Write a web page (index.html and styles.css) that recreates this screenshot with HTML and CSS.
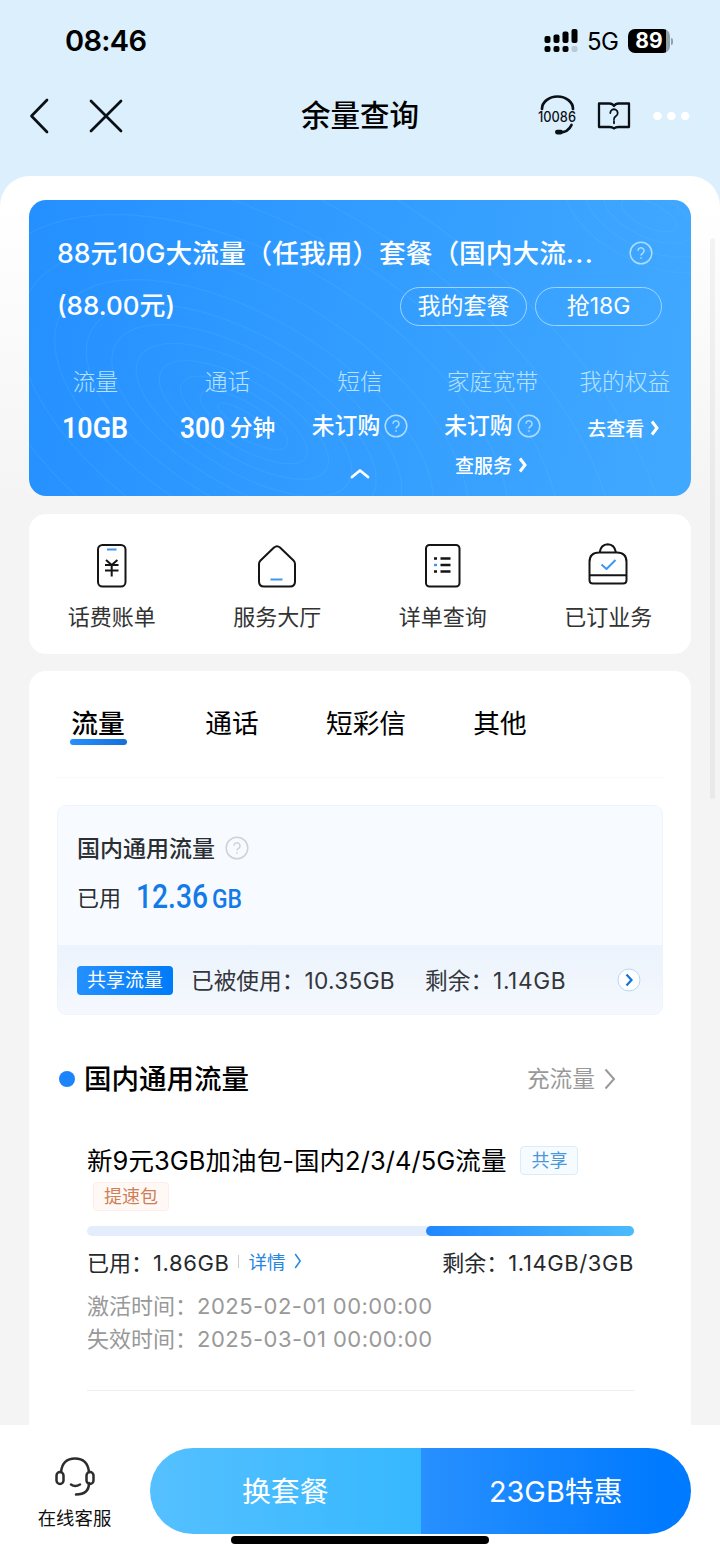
FILE: index.html
```html
<!DOCTYPE html>
<html lang="zh-CN">
<head>
<meta charset="utf-8">
<title>余量查询</title>
<link rel="stylesheet" href="styles.css">
</head>
<body>
<svg class="defs" width="0" height="0">
  <symbol id="help" viewBox="0 0 24 24"><circle cx="12" cy="12" r="10.8" fill="none" stroke="currentColor" stroke-width="1.500"/><path d="M9 9.800a3 3 0 1 1 4.600 2.500c-1.100.7-1.600 1.100-1.600 2.200M12 16.300v1.500" fill="none" stroke="currentColor" stroke-width="1.500"/></symbol>
</svg>
<header class="top">
  <div class="status">
    <span class="clock">08:46</span>
    <div class="signals">
      <svg width="34" height="24" viewBox="0 0 34 24"><rect x="0.500" y="7" width="6" height="7" rx="2"/><rect x="9.500" y="5.500" width="6" height="8.500" rx="2"/><rect x="18.500" y="2.500" width="6" height="11.500" rx="2"/><rect x="27.500" y="0" width="6" height="14" rx="2"/><rect x="0.500" y="17" width="6" height="6" rx="2"/><rect x="9.500" y="17" width="6" height="6" rx="2"/><rect x="18.500" y="17" width="6" height="6" rx="2"/><rect x="27.500" y="17" width="6" height="6" rx="2" fill="#b9c9d5"/></svg>
      <span class="net">5G</span>
      <span class="battery"><b>89</b></span><i class="nub"></i>
    </div>
  </div>
  <nav class="nav">
    <svg class="back" width="20" height="36" viewBox="0 0 20 36"><path d="M18 2 2.500 18 18 34"/></svg>
    <svg class="close" width="34" height="34" viewBox="0 0 34 34"><path d="m2 2 30 30M32 2 2 32"/></svg>
    <h1>余量查询</h1>
    <div class="tools">
      <svg width="48" height="42" viewBox="0 0 48 42"><path d="M9 14a15.500 12.500 0 0 1 31 0M38.500 30c-2.500 5.500-6 7.500-12 7.500" fill="none" stroke="#0b1016" stroke-width="2.300" stroke-linecap="round"/><rect x="22" y="34.800" width="8" height="4.600" rx="2.300" fill="#0b1016"/><text x="5" y="27" textLength="38" lengthAdjust="spacingAndGlyphs">10086</text></svg>
      <svg class="book" width="34" height="32" viewBox="0 0 34 32"><path d="M2 3.500h10.500q3 0 4.500 2.500 1.500-2.500 4.500-2.500H32V27H21.500q-3 0-4.500 1.500-1.500-1.500-4.500-1.500H2z"/><path class="mark" d="M13.300 13a3.700 3.700 0 1 1 5.700 3.100c-1.500 1-2 1.500-2 3.200M17 21v2.300"/></svg>
      <svg class="dots" width="37" height="10" viewBox="0 0 37 10"><circle cx="4.500" cy="5" r="4.300"/><circle cx="18.300" cy="5" r="4.300"/><circle cx="32.200" cy="5" r="4.300"/></svg>
    </div>
  </nav>
</header>
<main class="panel">
  <section class="plan">
    <svg class="waves" width="662" height="296" viewBox="0 0 662 296">
      <g transform="translate(215 220) rotate(31)"><ellipse rx="30" ry="8"/><ellipse rx="50" ry="17"/><ellipse rx="72" ry="27"/><ellipse rx="96" ry="38"/><ellipse rx="122" ry="51"/><ellipse rx="149" ry="66"/><ellipse rx="177" ry="83"/><ellipse rx="212" ry="103"/><ellipse rx="250" ry="130"/><ellipse rx="294" ry="162"/><ellipse rx="350" ry="195"/><ellipse rx="410" ry="230"/><ellipse rx="470" ry="268"/></g>
      <g transform="translate(620 15) rotate(25)"><ellipse rx="30" ry="12"/><ellipse rx="48" ry="22"/><ellipse rx="68" ry="34"/><ellipse rx="90" ry="48"/></g>
    </svg>
    <div class="plan-name"><span>88元10G大流量（任我用）套餐（国内大流<span class="dots3">...</span></span><svg class="q" width="24" height="24"><use href="#help"/></svg></div>
    <div class="plan-price"><span>(88.00元)</span><div class="pills"><a>我的套餐</a><a>抢18G</a></div></div>
    <div class="stats">
      <div class="stat"><label>流量</label><div class="val"><svg class="din" width="74" height="40"><text x="4" y="30" textLength="66" lengthAdjust="spacingAndGlyphs">10GB</text></svg></div></div>
      <div class="stat"><label>通话</label><div class="val"><svg class="din minutes" width="53" height="40"><text x="4" y="30" textLength="45" lengthAdjust="spacingAndGlyphs">300</text></svg><span class="unit">分钟</span></div></div>
      <div class="stat"><label>短信</label><div class="val up"><span>未订购</span><svg class="q" width="24" height="24"><use href="#help"/></svg></div></div>
      <div class="stat"><label>家庭宽带</label><div class="val up"><span>未订购</span><svg class="q" width="24" height="24"><use href="#help"/></svg></div><div class="link second"><span>查服务</span><svg width="10" height="16" viewBox="0 0 10 16"><path d="m2 1.500 5 6.500-5 6.500"/></svg></div></div>
      <div class="stat"><label>我的权益</label><div class="val link"><span>去查看</span><svg width="10" height="16" viewBox="0 0 10 16"><path d="m2 1.500 5 6.500-5 6.500"/></svg></div></div>
    </div>
    <svg class="fold" width="20" height="11" viewBox="0 0 20 11"><path d="m2 9 8-6.500L18 9"/></svg>
  </section>
  <section class="shortcuts">
    <a><svg width="46" height="46" viewBox="0 0 46 46"><rect x="9" y="3" width="27.500" height="41.500" rx="4.500"/><path class="blue" d="M18 7.500h9.500"/><path d="m17 18 5.700 5 5.700-5M16 23h13.500M16 28.500h13.500M22.700 23v11.500"/></svg>话费账单</a>
    <a><svg width="46" height="46" viewBox="0 0 46 46"><path d="M5 22q0-2 1.500-3.500L20 5.500q3-2.500 6 0l13.500 13Q41 20 41 22v17.500q0 5-5 5H10q-5 0-5-5z"/><path class="blue" d="M16.500 37.500h12"/></svg>服务大厅</a>
    <a><svg width="46" height="46" viewBox="0 0 46 46"><rect x="6" y="3" width="33.500" height="41.500" rx="3.500"/><path class="rows" d="M14 16.500h3m3.500 0h10M14 29.500h3m3.500 0h10M20.500 23h10"/><path class="blue rows" d="M14 23h3"/></svg>详单查询</a>
    <a><svg width="46" height="46" viewBox="0 0 46 46"><path d="M4.500 38V20q0-9.500 9.500-9.500h18q9.500 0 9.500 9.500v18q0 3.500-3.500 3.500H8q-3.500 0-3.500-3.500zM14.500 10.500q1.500-8 8.300-8.200 6.700.2 8.200 8.200M4.500 33.300h37"/><path class="blue" d="m16.500 22.500 5 4.500 9-9"/></svg>已订业务</a>
  </section>
  <section class="detail">
    <div class="tabs"><a class="on">流量</a><a>通话</a><a>短彩信</a><a>其他</a></div>
    <div class="usage">
      <div class="usage-top">
        <div class="usage-title"><span>国内通用流量</span><svg width="24" height="24"><use href="#help"/></svg></div>
        <div class="used"><span>已用</span><svg width="114" height="40"><text class="big" x="4" y="32" textLength="72" lengthAdjust="spacingAndGlyphs">12.36</text><text class="gb" x="80" y="32" textLength="30" lengthAdjust="spacingAndGlyphs">GB</text></svg></div>
      </div>
      <div class="shared"><em>共享流量</em><span class="s1">已被使用：<b>10.35GB</b></span><span class="s2">剩余：<b>1.14GB</b></span><svg width="24" height="24" viewBox="0 0 24 24"><circle cx="12" cy="12" r="11" fill="#fff" stroke="#b3d8f8"/><path d="m9.500 6.500 5 5.500-5 5.500" fill="none" stroke="#1474d8" stroke-width="2.200"/></svg></div>
    </div>
    <div class="group"><i></i><h2>国内通用流量</h2><a><span>充流量</span><svg width="12" height="22" viewBox="0 0 12 22"><path d="m1.500 1.500 8.500 9.500-8.500 9.500"/></svg></a></div>
    <article class="pack">
      <div class="pack-name"><span>新9元3GB加油包-国内2/3/4/5G流量</span><em class="tag">共享</em></div>
      <em class="tag speed">提速包</em>
      <div class="bar"><i style="width:38%"></i></div>
      <div class="pack-use"><span>已用：<b>1.86GB</b></span><i></i><a>详情<svg width="8" height="18" viewBox="0 0 8 18"><path d="m1.200 2 5 7-5 7"/></svg></a><span class="left">剩余：<b>1.14GB/3GB</b></span></div>
      <p>激活时间：<time>2025-02-01 00:00:00</time></p>
      <p>失效时间：<time>2025-03-01 00:00:00</time></p>
    </article>
  </section>
</main>
<div class="scroll"></div>
<footer>
  <a class="service"><svg width="42" height="42" viewBox="0 0 42 42"><path d="M7 16C8 7 13 2.500 21 2.500S34 7 35 16M35 27c0 8-5 11.500-13 11.500"/><rect x="2.500" y="16" width="7" height="12" rx="3.500"/><rect x="32.500" y="16" width="7" height="12" rx="3.500"/><path d="M17 28.500q4 3 9 0"/></svg>在线客服</a>
  <div class="cta"><a>换套餐</a><a>23GB特惠</a></div>
  <div class="home"></div>
</footer>
</body>
</html>
```

FILE: styles.css
```css
* { box-sizing: border-box; }
body {
  margin: 0; width: 720px; height: 1558px; overflow: hidden; position: relative;
  display: flex; flex-direction: column;
  background: #dbeffd; color: #000;
  font-family: Inter, "Noto Sans CJK SC", sans-serif; white-space: nowrap;
}
em, i { font-style: normal; }
svg { display: block; flex: none; }
.defs { position: absolute; }

.top { height: 176px; flex: none; }
.status { height: 82px; display: flex; align-items: center; justify-content: space-between; padding: 0 47px 0 65px; }
.clock { font-size: 29px; font-weight: 600; letter-spacing: -.7px; line-height: 40px; }
.signals { display: flex; align-items: center; }
.net { font-size: 24px; margin: 0 10px 0 9px; letter-spacing: -.8px; }
.battery { width: 42px; height: 24px; border-radius: 7px; background: linear-gradient(90deg, #000 38px, #92a0aa 38px); color: #fff; display: flex; align-items: center; justify-content: center; }
.battery b { font-size: 21px; font-weight: 700; line-height: 24px; }
.nub { width: 2px; height: 7px; margin-left: 1px; border-radius: 0 3px 3px 0; background: #92a0aa; }
.nav { height: 68px; display: flex; align-items: center; padding: 0 30px 0 29px; }
.nav path { fill: none; stroke: #0b1016; stroke-width: 2.700; stroke-linecap: round; stroke-linejoin: round; }
.close { margin-left: 40px; }
h1 { font-size: 29.500px; font-weight: 500; line-height: 40px; margin: -2px 0 0 178px; }
.tools { margin-left: auto; display: flex; align-items: center; }
.tools text { font-family: Inter, sans-serif; font-size: 14px; font-weight: 500; fill: #0b1016; }
.nav .book { margin-left: 16px; }
.nav .book path { stroke-width: 2.300; }
.nav .book .mark { stroke-width: 1.800; }
.dots { margin-left: 22px; fill: #fff; }

.panel { flex: 1; min-height: 0; overflow: hidden; border-radius: 30px 30px 0 0; padding: 24px 29px 0; background: linear-gradient(#fff 0, #fff 30px, #f4f4f4 330px); }
.plan { height: 296px; border-radius: 17px; background: linear-gradient(100deg, #2490ff, #41a9ff); color: #fff; position: relative; overflow: hidden; padding-top: 31px; }
.waves { position: absolute; left: 0; top: 0; }
.waves ellipse { fill: none; stroke: #7cc6ff; stroke-opacity: .13; stroke-width: 1.300; }
.plan-name, .plan-price, .stats { position: relative; }
.plan-name { height: 40px; display: flex; align-items: center; justify-content: space-between; padding: 0 38px 0 28px; font-size: 26.700px; font-weight: 500; }
.plan-name .q { margin-top: 4px; }
.dots3 { letter-spacing: 1.400px; }
.q { color: #addcff; }
.plan-price { height: 40px; margin-top: 12px; display: flex; align-items: center; justify-content: space-between; padding: 0 29px 0 28px; font-size: 26px; font-weight: 500; }
.pills { display: flex; gap: 8px; }
.pills a { width: 127px; height: 39px; border: 1px solid #9fd5ff; border-radius: 20px; font-size: 23px; line-height: 36px; font-weight: 400; text-align: center; margin-top: 6px; }
.stats { display: grid; grid-template-columns: repeat(5, 1fr); margin-top: 39px; }
.stat { display: flex; flex-direction: column; align-items: center; }
.stat label { font-size: 22.800px; line-height: 40px; font-weight: 300; color: #b9e2ff; }
.val { height: 40px; margin-top: 6px; display: flex; align-items: center; font-size: 22.800px; font-weight: 500; }
.val span { margin-top: -3px; }
.val.up { margin-top: 4px; height: 39px; }
.val .q { margin-left: 4px; }
.din text { font-family: Roboto, sans-serif; font-size: 29.500px; font-weight: 600; fill: #fff; }
.minutes { margin-left: -4px; }
.val .unit { margin-left: 1px; }
.val.link, .link { font-size: 19px; font-weight: 500; }
.link { display: flex; align-items: center; }
.link span { margin-top: -2px; }
.link svg { margin-left: 6px; margin-right: 2px; }
.link path { fill: none; stroke: #fff; stroke-width: 3; }
.second { height: 40px; }
.fold { position: absolute; left: 321px; top: 268px; fill: none; stroke: #fff; stroke-width: 2.800; stroke-linecap: round; stroke-linejoin: round; }

.shortcuts { height: 140px; margin-top: 18px; border-radius: 17px; background: #fff; display: grid; grid-template-columns: repeat(4, 1fr); padding-top: 28px; }
.shortcuts a { display: flex; flex-direction: column; align-items: center; font-size: 22px; line-height: 40px; gap: 9px; color: #333; }
.shortcuts path, .shortcuts rect { fill: none; stroke: #151515; stroke-width: 2; stroke-linejoin: round; }
.shortcuts .rows { stroke-width: 2.400; }
.shortcuts .blue { stroke: #3f96f0; }

.detail { height: 790px; margin-top: 17px; border-radius: 17px; background: #fff; padding: 0 28px; }
.tabs { height: 107px; border-bottom: 1px solid #f9f9f9; display: grid; grid-template-columns: 108px repeat(3, 134px); align-content: start; padding-top: 32px; text-align: center; }
.tabs a { font-size: 26.700px; line-height: 41px; height: 42px; }
.tabs .on { font-weight: 500; line-height: 40px; justify-self: start; margin-left: 12px; width: 58px; position: relative; }
.tabs .on::after { content: ""; position: absolute; left: 1px; right: 0; bottom: 0; height: 6px; border-radius: 3px; background: linear-gradient(90deg, #2490ff, #1670d8); }
.usage { margin-top: 27px; height: 210px; border: 1px solid #ecf5fd; border-radius: 9px; overflow: hidden; background: #f7fbff; }
.usage-top { height: 139px; padding: 22px 20px 0 19px; }
.usage-title { display: flex; align-items: center; height: 40px; font-size: 23px; font-weight: 500; color: #2b2f33; }
.usage-title span { margin-top: -3px; }
.usage-title svg { margin-left: 10px; color: #ccd3d8; }
.used { display: flex; margin-top: 8px; color: #2b2f33; font-size: 22px; }
.used span { line-height: 45px; }
.used svg { margin-left: 11px; }
.used text { font-family: Roboto, sans-serif; font-weight: 500; fill: #147ae8; }
.used .big { font-size: 34px; }
.used .gb { font-size: 25px; }
.shared { height: 70px; padding: 0 21px 0 19px; display: flex; align-items: center; background: linear-gradient(#ecf3fc, #f5f8fe); color: #33373c; font-size: 22.700px; }
.shared em { width: 96px; height: 29px; border-radius: 4px; background: linear-gradient(90deg, #2490ff, #007bf8); color: #fff; font-size: 19px; line-height: 29px; text-align: center; }
.shared span { margin-top: -2px; }
.shared b { font-weight: 400; letter-spacing: .3px; }
.s1 { margin-left: 18px; }
.s2 { margin-left: 30px; }
.s2 b { letter-spacing: .6px; }
.shared svg { margin-left: auto; }
.group { display: flex; align-items: center; height: 40px; margin-top: 44px; padding: 0 47px 0 2px; }
.group i { width: 16px; height: 16px; border-radius: 50%; background: #1c84fa; }
h2 { margin: 0 0 0 9px; font-size: 27.500px; font-weight: 500; line-height: 40px; }
.group a { margin-left: auto; display: flex; align-items: center; gap: 9px; font-size: 22.700px; color: #999; }
.group a span { margin-top: -3px; }
.group path { fill: none; stroke: #999; stroke-width: 2; }
.pack { margin: 41px 29px 0 30px; height: 251px; border-bottom: 1px solid #eee; }
.pack-name { height: 40px; display: flex; align-items: center; font-size: 25.500px; }
.pack-name span { margin-top: -3px; letter-spacing: .05px; }
.tag { display: block; width: 58px; height: 29px; border: 1px solid #d9ecfb; border-radius: 4px; background: #f6fbff; color: #4c97d6; font-size: 18px; line-height: 27px; text-align: center; margin-left: 14px; }
.speed { width: 76px; margin: 2px 0 0 6px; border-color: #fdeee9; background: #fff8f5; color: #cf7f55; }
.bar { height: 10px; border-radius: 5px; background: #e4edfb; margin-top: 15px; display: flex; justify-content: flex-end; }
.bar i { border-radius: 5px; background: linear-gradient(90deg, #2087ff, #4cbbfb); }
.pack-use { height: 40px; margin-top: 5px; display: flex; align-items: center; font-size: 22px; color: #26292c; }
.pack-use b { font-weight: 400; letter-spacing: .6px; }
.pack-use i { width: 1px; height: 13px; background: #ccc; margin: 0 9px 0 9px; }
.pack-use a { display: flex; align-items: center; gap: 8px; font-size: 18.500px; color: #2585e3; }
.pack-use path { fill: none; stroke: #2585e3; stroke-width: 1.500; }
.left { margin-left: auto; }
.pack p { margin: 0; height: 33px; line-height: 33px; font-size: 22px; color: #999; }
.pack time { letter-spacing: .47px; }
.pack-use + p { margin-top: 9px; }
.scroll { position: absolute; left: 710px; top: 238px; width: 5px; height: 561px; border-radius: 3px; background: rgba(0, 0, 0, .045); }

footer { height: 133px; flex: none; background: #fff; position: relative; display: flex; align-items: flex-start; padding: 23px 29px 0 29px; }
.service { width: 91px; display: flex; flex-direction: column; align-items: center; padding-top: 8px; font-size: 18.400px; line-height: 30px; gap: 5px; color: #111; }
.service svg { fill: none; stroke: #2d2d2d; stroke-width: 2.500; stroke-linecap: round; }
.cta { margin-left: 30px; width: 541px; height: 86px; border-radius: 43px; overflow: hidden; display: flex; }
.cta a { flex: 1; color: #fff; font-size: 28.900px; line-height: 87px; text-align: center; background: linear-gradient(90deg, #55c0ff, #36b8ff); }
.cta a + a { background: linear-gradient(90deg, #2890ff, #007aff 90%); }
.home { position: absolute; left: 231px; top: 111px; width: 258px; height: 8px; border-radius: 4px; background: #000; }
```
